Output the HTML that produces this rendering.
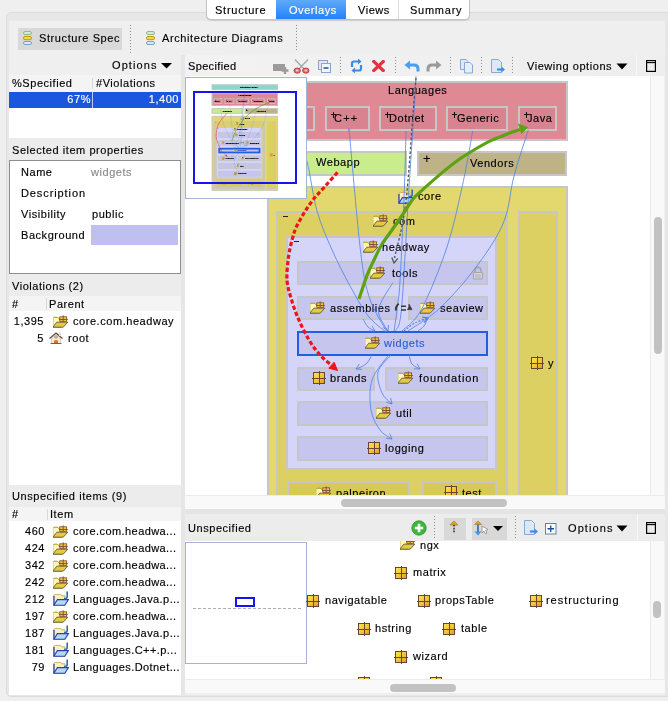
<!DOCTYPE html>
<html><head><meta charset="utf-8">
<style>
*{margin:0;padding:0;box-sizing:border-box}
html,body{width:668px;height:701px;overflow:hidden;background:#efefef;font-family:"Liberation Sans",sans-serif;font-size:12px;color:#000;position:relative}
.a{position:absolute}
.t{position:absolute;white-space:nowrap;line-height:14px;will-change:transform;font-size:11px;letter-spacing:0.55px;-webkit-text-stroke:0.15px currentColor}
.sep{position:absolute;width:1px;background:repeating-linear-gradient(#8e8e8e 0 1px,transparent 1px 3px)}
</style></head><body>
<svg width="0" height="0" style="position:absolute">
<defs>
<linearGradient id="pg" x1="0" y1="0" x2="1" y2="1"><stop offset="0" stop-color="#ffe650"/><stop offset="0.6" stop-color="#f0c030"/><stop offset="1" stop-color="#d89828"/></linearGradient>
<symbol id="fy" viewBox="0.8 -0.2 16 13">
 <path d="M0.6 12 V3.2 L1.8 2 H5 L6 3 H9 V12 Z" fill="#fff6bc" stroke="#a89c12" stroke-width="1"/>
 <path d="M0.6 12 L4.6 7 H15.6 L11 12 Z" fill="#e4ca3c" stroke="#5c5a48" stroke-width="0.9"/>
 <rect x="7.6" y="1.6" width="6.8" height="4.6" fill="#f5c832" stroke="#8a5a3a" stroke-width="0.9"/>
 <path d="M11 0.2 V6.4 M6.8 4.3 H15.6" stroke="#7a4a3a" stroke-width="0.9"/>
</symbol>
<symbol id="fb" viewBox="0 0 16 15">
 <path d="M0.8 4.2 L0.8 14.2 L12 14.2 L12 4.8 L8.6 4.8 L7.6 3.4 L2.6 3.4 Z" fill="#fdf0bc" stroke="#c9b060" stroke-width="1"/>
 <path d="M0.8 14.2 L4.4 8.6 L15.4 8.6 L11.8 14.2 Z" fill="#b6d8f6" stroke="#2442b4" stroke-width="1.1"/>
 <path d="M1 5 V14" stroke="#2442b4" stroke-width="1.2"/>
 <path d="M14.2 0.5 V5.5 Q14.2 7.5 12.2 7.5 H11" stroke="#2c6cb8" stroke-width="1.6" fill="none"/>
</symbol>
<symbol id="pk" viewBox="0 0 14 14">
 <rect x="1.5" y="1.5" width="11" height="11" fill="url(#pg)" stroke="#6a4434" stroke-width="1"/>
 <path d="M7.5 0 V14 M0 7.5 H14" stroke="#6a4434" stroke-width="1"/>
</symbol>
<symbol id="hs" viewBox="0 0 14 12">
 <path d="M2.5 6 V11.5 H11.5 V6 L7 2 Z" fill="#f4e8d8" stroke="#c8b8a0" stroke-width="0.6"/>
 <path d="M0.5 6.5 L7 1 L13.5 6.5" fill="none" stroke="#5a4a48" stroke-width="1.1"/>
 <rect x="10" y="0.5" width="2" height="3.5" fill="#e8dccc"/>
 <rect x="5.8" y="4" width="2.4" height="2" fill="#b8d8f0" stroke="#c07030" stroke-width="0.6"/>
 <path d="M5 11.5 V9 Q7 7 9 9 V11.5 Z" fill="#d07828"/>
 <path d="M1.5 11.5 H12.5" stroke="#903020" stroke-width="0.8"/>
</symbol>
<symbol id="lk" viewBox="0 0 12 14">
 <path d="M3 6.5 V4.5 Q3 1.2 6 1.2 Q9 1.2 9 4.5 V6.5" fill="none" stroke="#a4a4a4" stroke-width="1.5"/>
 <rect x="1.5" y="6.5" width="9" height="6.5" rx="1" fill="#d8d8e4" stroke="#a4a4a4" stroke-width="1.1"/>
 <path d="M3 9 H9 M3 11 H9" stroke="#a4a4a4" stroke-width="0.9"/>
</symbol>
</defs></svg>

<!-- outer panel -->
<div class="a" style="left:6px;top:12px;width:670px;height:685px;border:1px solid #dcdcdc;border-radius:5px;background:#e7e7e7"></div>
<div class="a" style="left:9px;top:21px;width:656px;height:674px;background:#efefef"></div>

<!-- top tabs -->
<div class="a" style="left:206px;top:-4px;width:264px;height:24px;background:#fff;border:1px solid #c4c4c4;border-radius:5px;overflow:hidden;box-shadow:0 0.5px 1px rgba(0,0,0,0.12)">
  <div class="a" style="left:69px;top:0;width:70px;height:23px;background:linear-gradient(#6ab0fb,#1f80fa)"></div>
  <div class="a" style="left:191px;top:0;width:1px;height:23px;background:#dcdcdc"></div>
  <div class="t" style="left:8px;top:6px;letter-spacing:0.75px">Structure</div>
  <div class="t" style="left:82px;top:6px;color:#fff">Overlays</div>
  <div class="t" style="left:151px;top:6px">Views</div>
  <div class="t" style="left:203px;top:6px;letter-spacing:0.75px">Summary</div>
</div>


<!-- LEFT PANEL -->
<!-- toolbar -->
<div class="a" style="left:18px;top:28px;width:104px;height:22px;background:#d9d9d9"></div>
<div class="sep" style="left:130px;top:25px;height:28px"></div>
<div class="sep" style="left:296px;top:25px;height:26px"></div>
<svg class="a" style="left:22px;top:30px" width="12" height="16" viewBox="0 0 12 16">
 <rect x="1.5" y="1.5" width="8" height="3" rx="1.5" fill="#d5ead0" stroke="#8dbb8a"/>
 <rect x="1.5" y="6.5" width="8" height="3.2" rx="1.5" fill="#f5d850" stroke="#c29a10"/>
 <rect x="1.5" y="11.5" width="8" height="3" rx="1.5" fill="#dde8f8" stroke="#7a9ed0"/>
</svg>
<div class="t" style="left:39px;top:31px;letter-spacing:0.6px">Structure Spec</div>
<svg class="a" style="left:145px;top:30px" width="12" height="16" viewBox="0 0 12 16">
 <rect x="1.5" y="1.5" width="8" height="3" rx="1.5" fill="#d5ead0" stroke="#8dbb8a"/>
 <rect x="1.5" y="6.5" width="8" height="3.2" rx="1.5" fill="#f5d850" stroke="#c29a10"/>
 <rect x="1.5" y="11.5" width="8" height="3" rx="1.5" fill="#dde8f8" stroke="#7a9ed0"/>
</svg>
<div class="t" style="left:162px;top:31px;letter-spacing:0.6px">Architecture Diagrams</div>

<!-- options row -->
<div class="a" style="left:9px;top:55px;width:172px;height:20px;background:#efefef"></div>
<div class="t" style="left:112px;top:58px;letter-spacing:1.1px">Options</div>
<svg class="a" style="left:160.5px;top:63px" width="11" height="6"><path d="M0 0 L11 0 L5.5 5.5 Z" fill="#000"/></svg>
<!-- table -->
<div class="a" style="left:9px;top:75px;width:172px;height:65px;background:#fff"></div>
<div class="a" style="left:9px;top:75px;width:172px;height:17px;background:#f4f4f4"></div>
<div class="a" style="left:92px;top:78px;width:1px;height:11px;background:#d8d8d8"></div>
<div class="t" style="left:12px;top:76px">%Specified</div>
<div class="t" style="left:96px;top:76px">#Violations</div>
<div class="a" style="left:9px;top:92px;width:172px;height:16px;background:#1a57de"></div>
<div class="a" style="left:92px;top:92px;width:1px;height:16px;background:#fff;opacity:.7"></div>
<div class="t" style="left:9px;top:92px;width:82px;text-align:right;color:#fff">67%</div>
<div class="t" style="left:93px;top:92px;width:86px;text-align:right;color:#fff">1,400</div>

<!-- selected item properties -->
<div class="a" style="left:9px;top:138px;width:172px;height:22px;background:#ececec"></div>
<div class="t" style="left:12px;top:143px">Selected item properties</div>
<div class="a" style="left:9px;top:160px;width:172px;height:114px;background:#fff;border:1px solid #8e8e8e"></div>
<div class="t" style="left:21px;top:165px">Name</div>
<div class="t" style="left:91px;top:165px;color:#8a8a8a">widgets</div>
<div class="t" style="left:21px;top:186px;letter-spacing:0.9px">Description</div>
<div class="t" style="left:21px;top:207px">Visibility</div>
<div class="t" style="left:92px;top:207px">public</div>
<div class="t" style="left:21px;top:228px">Background</div>
<div class="a" style="left:91px;top:225px;width:87px;height:20px;background:#bfbff0"></div>

<!-- violations -->
<div class="a" style="left:9px;top:274px;width:172px;height:22px;background:#ececec"></div>
<div class="t" style="left:12px;top:279px">Violations (2)</div>
<div class="a" style="left:9px;top:296px;width:172px;height:189px;background:#fff"></div>
<div class="a" style="left:9px;top:296px;width:172px;height:15px;background:#f4f4f4"></div>
<div class="a" style="left:46px;top:298px;width:1px;height:12px;background:#d8d8d8"></div>
<div class="t" style="left:12px;top:297px">#</div>
<div class="t" style="left:49px;top:297px">Parent</div>
<div class="t" style="left:9px;top:314px;width:35px;text-align:right">1,395</div>
<div class="t" style="left:73px;top:314px">core.com.headway</div>
<div class="a" style="left:53px;top:315px"><svg width="16" height="13"><use href="#fy"/></svg></div>
<div class="t" style="left:9px;top:331px;width:35px;text-align:right">5</div>
<div class="t" style="left:68px;top:331px">root</div>
<div class="a" style="left:49px;top:332px"><svg width="14" height="12"><use href="#hs"/></svg></div>

<!-- unspecified items -->
<div class="a" style="left:9px;top:485px;width:172px;height:22px;background:#ececec"></div>
<div class="t" style="left:12px;top:489px">Unspecified items (9)</div>
<div class="a" style="left:9px;top:507px;width:172px;height:188px;background:#fff"></div>
<div class="a" style="left:9px;top:507px;width:172px;height:14px;background:#f4f4f4"></div>
<div class="a" style="left:47px;top:509px;width:1px;height:11px;background:#d8d8d8"></div>
<div class="t" style="left:12px;top:507px">#</div>
<div class="t" style="left:50px;top:507px">Item</div>
<div class="t" style="left:10px;top:524.0px;width:35px;text-align:right">460</div>
<div class="t" style="left:73px;top:524.0px;letter-spacing:0.42px">core.com.headwa...</div>
<div class="a" style="left:53px;top:525.0px"><svg width="16" height="13"><use href="#fy"/></svg></div>
<div class="t" style="left:10px;top:541.0px;width:35px;text-align:right">424</div>
<div class="t" style="left:73px;top:541.0px;letter-spacing:0.42px">core.com.headwa...</div>
<div class="a" style="left:53px;top:542.0px"><svg width="16" height="13"><use href="#fy"/></svg></div>
<div class="t" style="left:10px;top:558.1px;width:35px;text-align:right">342</div>
<div class="t" style="left:73px;top:558.1px;letter-spacing:0.42px">core.com.headwa...</div>
<div class="a" style="left:53px;top:559.1px"><svg width="16" height="13"><use href="#fy"/></svg></div>
<div class="t" style="left:10px;top:575.1px;width:35px;text-align:right">242</div>
<div class="t" style="left:73px;top:575.1px;letter-spacing:0.42px">core.com.headwa...</div>
<div class="a" style="left:53px;top:576.1px"><svg width="16" height="13"><use href="#fy"/></svg></div>
<div class="t" style="left:10px;top:592.2px;width:35px;text-align:right">212</div>
<div class="t" style="left:73px;top:592.2px;letter-spacing:0.42px">Languages.Java.p...</div>
<div class="a" style="left:53px;top:591.2px"><svg width="16" height="15"><use href="#fb"/></svg></div>
<div class="t" style="left:10px;top:609.2px;width:35px;text-align:right">197</div>
<div class="t" style="left:73px;top:609.2px;letter-spacing:0.42px">core.com.headwa...</div>
<div class="a" style="left:53px;top:610.2px"><svg width="16" height="13"><use href="#fy"/></svg></div>
<div class="t" style="left:10px;top:626.3px;width:35px;text-align:right">187</div>
<div class="t" style="left:73px;top:626.3px;letter-spacing:0.42px">Languages.Java.p...</div>
<div class="a" style="left:53px;top:625.3px"><svg width="16" height="15"><use href="#fb"/></svg></div>
<div class="t" style="left:10px;top:643.4px;width:35px;text-align:right">181</div>
<div class="t" style="left:73px;top:643.4px;letter-spacing:0.42px">Languages.C++.p...</div>
<div class="a" style="left:53px;top:642.4px"><svg width="16" height="15"><use href="#fb"/></svg></div>
<div class="t" style="left:10px;top:660.4px;width:35px;text-align:right">79</div>
<div class="t" style="left:73px;top:660.4px;letter-spacing:0.42px">Languages.Dotnet...</div>
<div class="a" style="left:53px;top:659.4px"><svg width="16" height="15"><use href="#fb"/></svg></div>

<!-- RIGHT PANEL -->
<div class="a" style="left:181px;top:55px;width:4px;height:640px;background:#e6e6e6"></div>
<!-- specified toolbar -->
<div class="a" style="left:185px;top:55px;width:480px;height:21px;background:linear-gradient(90deg,#f2f2f2,#eeeeee)"></div>
<div class="t" style="left:188px;top:59px;letter-spacing:0.35px">Specified</div>
<!-- diagram viewport -->
<div class="a" style="left:185px;top:76px;width:465px;height:419px;background:#fff;overflow:hidden" id="dv">
<div class="a" style="left:-185px;top:-76px;width:668px;height:701px"><div class="a" style="left:267px;top:43px;width:301px;height:24px;background:#88d8d0;border:2px solid #c6c6c6"></div>
<div class="t" style="left:395px;top:48px;">Structure Spec</div>
<div class="a" style="left:267px;top:81px;width:301px;height:60px;background:#df8995;border:2px solid #c6c6c6"></div>
<div class="t" style="left:388px;top:83px;">Languages</div>
<div class="a" style="left:276px;top:106px;width:39px;height:25px;background:#d98390;border:2px solid #c6c6c6"></div>
<div class="a" style="left:282px;top:114px;width:5px;height:1px;background:#111"></div><div class="a" style="left:284px;top:111.5px;width:1px;height:6px;background:#111"></div>
<div class="t" style="left:279px;top:111px;">Relo</div>
<div class="a" style="left:325px;top:106px;width:45px;height:25px;background:#d98390;border:2px solid #c6c6c6"></div>
<div class="a" style="left:331px;top:114px;width:5px;height:1px;background:#111"></div><div class="a" style="left:333px;top:111.5px;width:1px;height:6px;background:#111"></div>
<div class="t" style="left:334px;top:111px;letter-spacing:1.2px">C++</div>
<div class="a" style="left:379px;top:106px;width:58px;height:25px;background:#d98390;border:2px solid #c6c6c6"></div>
<div class="a" style="left:385px;top:114px;width:5px;height:1px;background:#111"></div><div class="a" style="left:387px;top:111.5px;width:1px;height:6px;background:#111"></div>
<div class="t" style="left:389px;top:111px;">Dotnet</div>
<div class="a" style="left:446px;top:106px;width:62px;height:25px;background:#d98390;border:2px solid #c6c6c6"></div>
<div class="a" style="left:452px;top:114px;width:5px;height:1px;background:#111"></div><div class="a" style="left:454px;top:111.5px;width:1px;height:6px;background:#111"></div>
<div class="t" style="left:457px;top:111px;">Generic</div>
<div class="a" style="left:518px;top:106px;width:39px;height:25px;background:#d98390;border:2px solid #c6c6c6"></div>
<div class="a" style="left:524px;top:114px;width:5px;height:1px;background:#111"></div><div class="a" style="left:526px;top:111.5px;width:1px;height:6px;background:#111"></div>
<div class="t" style="left:526.5px;top:111px;">Java</div>
<div class="a" style="left:267px;top:151px;width:140px;height:25px;background:#c9ec8d;border:2px solid #c6c6c6"></div>
<div class="t" style="left:316px;top:155px;">Webapp</div>
<div class="a" style="left:417px;top:151px;width:150px;height:25px;background:#beb386;border:2px solid #c6c6c6"></div>
<div class="t" style="left:423px;top:152px;font-size:13px">+</div>
<div class="t" style="left:470px;top:156px;">Vendors</div>
<div class="a" style="left:267px;top:186px;width:301px;height:340px;background:#e3d86d;border:2px solid #c6c6c6"></div>
<div class="a" style="left:398px;top:189px"><svg width="16" height="15"><use href="#fb"/></svg></div>
<div class="t" style="left:418px;top:189px;">core</div>
<div class="a" style="left:276px;top:211px;width:232px;height:307px;background:#dcd062;border:2px solid #c6c6c6"></div>
<div class="a" style="left:283px;top:215.5px;width:5px;height:1.2px;background:#222"></div>
<div class="a" style="left:373px;top:214px"><svg width="16" height="13"><use href="#fy"/></svg></div>
<div class="t" style="left:393px;top:214px;">com</div>
<div class="a" style="left:518px;top:211px;width:40px;height:307px;background:#dcd062;border:2px solid #c6c6c6"></div>
<div class="a" style="left:530px;top:356px"><svg width="14" height="14"><use href="#pk"/></svg></div>
<div class="t" style="left:548px;top:356px;">y</div>
<div class="a" style="left:286px;top:236px;width:211px;height:234px;background:#d5d5fa;border:2px solid #c6c6c6"></div>
<div class="a" style="left:293.5px;top:240.5px;width:5px;height:1.2px;background:#222"></div>
<div class="a" style="left:363px;top:240px"><svg width="16" height="13"><use href="#fy"/></svg></div>
<div class="t" style="left:382px;top:240px;">headway</div>
<div class="a" style="left:297px;top:261px;width:191px;height:24px;background:#c5c5ee;border:2px solid #c6c6c6"></div>
<div class="a" style="left:370px;top:266px"><svg width="16" height="13"><use href="#fy"/></svg></div>
<div class="t" style="left:392px;top:266px;">tools</div>
<div class="a" style="left:472px;top:266px"><svg width="12" height="14"><use href="#lk"/></svg></div>
<div class="a" style="left:297px;top:296px;width:101px;height:24px;background:#c5c5ee;border:2px solid #c6c6c6"></div>
<div class="a" style="left:310px;top:301px"><svg width="16" height="13"><use href="#fy"/></svg></div>
<div class="t" style="left:330px;top:301px;">assemblies</div>
<div class="a" style="left:408px;top:296px;width:80px;height:24px;background:#c5c5ee;border:2px solid #c6c6c6"></div>
<div class="a" style="left:420px;top:301px"><svg width="16" height="13"><use href="#fy"/></svg></div>
<div class="t" style="left:440px;top:301px;">seaview</div>
<div class="a" style="left:297px;top:331px;width:191px;height:25px;background:#c5c5ee;border:2px solid #1f5fe0"></div>
<div class="a" style="left:365px;top:336px"><svg width="16" height="13"><use href="#fy"/></svg></div>
<div class="t" style="left:384px;top:336px;color:#2a5fd8">widgets</div>
<div class="a" style="left:297px;top:367px;width:78px;height:24px;background:#c5c5ee;border:2px solid #c6c6c6"></div>
<div class="a" style="left:312px;top:371px"><svg width="14" height="14"><use href="#pk"/></svg></div>
<div class="t" style="left:330px;top:371px;">brands</div>
<div class="a" style="left:385px;top:367px;width:103px;height:24px;background:#c5c5ee;border:2px solid #c6c6c6"></div>
<div class="a" style="left:398px;top:371px"><svg width="16" height="13"><use href="#fy"/></svg></div>
<div class="t" style="left:419px;top:371px;letter-spacing:0.9px">foundation</div>
<div class="a" style="left:297px;top:401px;width:191px;height:25px;background:#c5c5ee;border:2px solid #c6c6c6"></div>
<div class="a" style="left:376px;top:406px"><svg width="16" height="13"><use href="#fy"/></svg></div>
<div class="t" style="left:396px;top:406px;">util</div>
<div class="a" style="left:297px;top:436px;width:191px;height:25px;background:#c5c5ee;border:2px solid #c6c6c6"></div>
<div class="a" style="left:367px;top:441px"><svg width="14" height="14"><use href="#pk"/></svg></div>
<div class="t" style="left:385px;top:441px;">logging</div>
<div class="a" style="left:287px;top:481px;width:123px;height:29px;background:#d6ca55;border:2px solid #c6c6c6"></div>
<div class="a" style="left:316px;top:486px"><svg width="16" height="13"><use href="#fy"/></svg></div>
<div class="t" style="left:336px;top:486px;">palpeiron</div>
<div class="a" style="left:422px;top:481px;width:75px;height:29px;background:#d6ca55;border:2px solid #c6c6c6"></div>
<div class="a" style="left:444px;top:485px"><svg width="14" height="14"><use href="#pk"/></svg></div>
<div class="t" style="left:462px;top:486px;">test</div>
<svg class="a" style="left:0;top:0" width="668" height="701"><path d="M300.0,148.0 C301.2,150.5 304.6,152.5 307.4,163.0 C310.2,173.5 312.9,196.3 317.0,210.8 C321.1,225.3 326.5,237.3 332.0,249.8 C337.5,262.3 343.9,274.7 349.9,285.7 C355.9,296.7 361.9,307.9 367.9,315.6 C373.9,323.3 382.8,329.3 385.8,332.0" stroke="#4f80e6" stroke-width="0.8" fill="none"/>
<path d="M349.0,131.0 C349.2,132.5 348.1,120.2 350.0,140.0 C351.9,159.8 357.2,223.5 360.4,249.8 C363.6,276.1 365.0,284.0 369.4,297.7 C373.8,311.4 384.1,326.3 387.0,332.0" stroke="#4f80e6" stroke-width="0.8" fill="none"/>
<path d="M406.0,131.0 C405.7,141.3 405.2,167.7 404.2,192.7 C403.2,217.7 401.2,261.6 400.0,281.2 C398.8,300.8 398.0,301.7 397.0,310.0 C396.0,318.3 394.5,327.5 394.0,331.0" stroke="#4f80e6" stroke-width="0.8" fill="none"/>
<path d="M416.0,76.0 C415.7,81.7 415.4,90.1 414.2,110.0 C412.9,129.9 410.6,162.3 408.5,195.6 C406.4,228.9 403.6,287.4 401.4,310.0 C399.1,332.6 396.1,327.5 395.0,331.0" stroke="#4f80e6" stroke-width="0.8" fill="none"/>
<path d="M472.7,131.0 C471.0,139.9 467.0,164.9 462.7,184.2 C458.4,203.5 453.9,226.1 447.0,247.0 C440.1,267.9 428.8,295.7 421.3,309.7 C413.8,323.7 405.2,327.4 402.0,331.0" stroke="#4f80e6" stroke-width="0.8" fill="none"/>
<path d="M528.3,130.0 C525.9,137.7 518.0,160.8 514.0,176.0 C509.9,191.2 509.9,206.6 504.0,221.3 C498.1,236.0 488.8,249.7 478.4,264.0 C467.9,278.3 453.0,295.7 441.3,306.9 C429.6,318.1 413.6,327.0 408.0,331.0" stroke="#4f80e6" stroke-width="0.8" fill="none"/>
<path d="M392.8,282.6 C390.4,287.2 379.3,301.9 378.5,310.0 C377.7,318.1 386.4,327.5 388.0,331.0" stroke="#4f80e6" stroke-width="0.8" fill="none"/>
<path d="M388.6,325.0 L388.0,331.0 L383.1,327.5" stroke="#4f80e6" stroke-width="0.8" fill="none"/>
<path d="M363.0,319.0 C363.8,320.3 366.0,325.0 368.0,327.0 C370.0,329.0 373.8,330.3 375.0,331.0" stroke="#4f80e6" stroke-width="0.8" fill="none"/>
<path d="M372.0,325.8 L375.0,331.0 L369.0,331.0" stroke="#4f80e6" stroke-width="0.8" fill="none"/>
<path d="M372.0,355.0 C371.0,356.5 368.7,361.7 366.0,364.0 C363.3,366.3 357.7,368.2 356.0,369.0" stroke="#4f80e6" stroke-width="0.8" fill="none"/>
<path d="M362.0,369.4 L356.0,369.0 L359.3,364.0" stroke="#4f80e6" stroke-width="0.8" fill="none"/>
<path d="M409.0,355.0 C409.5,356.5 410.2,361.7 412.0,364.0 C413.8,366.3 418.7,368.2 420.0,369.0" stroke="#4f80e6" stroke-width="0.8" fill="none"/>
<path d="M417.2,363.7 L420.0,369.0 L414.0,368.8" stroke="#4f80e6" stroke-width="0.8" fill="none"/>
<path d="M391.0,355.0 C388.8,357.8 379.5,365.7 378.0,372.0 C376.5,378.3 379.7,387.7 382.0,393.0 C384.3,398.3 390.3,402.2 392.0,404.0" stroke="#4f80e6" stroke-width="0.8" fill="none"/>
<path d="M390.7,398.1 L392.0,404.0 L386.3,402.2" stroke="#4f80e6" stroke-width="0.8" fill="none"/>
<path d="M388.6,355.0 C385.8,359.2 374.9,370.8 372.0,380.0 C369.1,389.2 369.7,401.7 371.0,410.0 C372.3,418.3 376.5,425.2 380.0,430.0 C383.5,434.8 390.0,437.5 392.0,439.0" stroke="#4f80e6" stroke-width="0.8" fill="none"/>
<path d="M389.6,433.5 L392.0,439.0 L386.0,438.3" stroke="#4f80e6" stroke-width="0.8" fill="none"/>
<path d="M404.0,331.0 C405.8,329.7 411.0,325.2 415.0,323.0 C419.0,320.8 425.8,318.8 428.0,318.0" stroke="#4f80e6" stroke-width="1.2" fill="none" stroke-dasharray="2,1.5"/>
<path d="M422.1,317.1 L428.0,318.0 L424.2,322.7" stroke="#4f80e6" stroke-width="1.2" fill="none"/>
<path d="M418.0,331.0 C419.0,330.2 422.3,328.2 424.0,326.0 C425.7,323.8 427.3,319.3 428.0,318.0" stroke="#4f80e6" stroke-width="0.8" fill="none"/>
<path d="M416.0,78.0 C415.6,83.3 415.0,89.0 413.3,110.0 C411.6,131.0 408.7,179.5 405.6,204.2 C402.5,228.9 396.4,249.0 394.5,258.0" stroke="#4a5468" stroke-width="1.3" fill="none" stroke-dasharray="2.6,2"/>
<path d="M397.8,258.3 L394.0,263.0 L391.8,257.4" stroke="#505868" stroke-width="1.3" fill="none"/>
<path d="M401,306.3 H406 M401,310.1 H406" stroke="#3a3a3a" stroke-width="1.5" fill="none"/>
<path d="M398.8,303.8 Q395.6,306 395.8,310.5" stroke="#3a3a3a" stroke-width="2" fill="none"/><path d="M407.5,309.6 L412,309.6 L409,304.2 Q409.5,307.5 407.5,309.6 Z" fill="#3a3a3a" stroke="#3a3a3a" stroke-width="0.8"/>
<path d="M359.0,299.0 C360.4,295.0 364.7,281.4 367.2,274.9 C369.7,268.4 371.6,265.0 374.0,260.0 C376.4,255.0 378.5,250.0 381.5,245.0 C384.5,240.0 388.5,235.0 392.0,230.0 C395.5,225.0 399.0,220.0 402.4,215.0 C405.8,210.0 409.3,203.8 412.2,200.0 C415.1,196.2 415.7,196.2 420.0,192.2 C424.3,188.2 432.0,181.2 438.0,176.1 C444.0,171.0 449.9,166.0 455.9,161.7 C461.9,157.3 467.9,153.6 473.9,150.0 C479.9,146.4 485.9,142.9 491.9,140.1 C497.9,137.3 505.1,134.8 509.8,133.0 C514.5,131.2 518.3,130.2 520.0,129.6" stroke="#5ca214" stroke-width="3.2" fill="none" stroke-linecap="butt"/>
<path d="M527.5,127.5 L518.5,124 L521.5,133.5 Z" fill="#5ca214" stroke="#5ca214" stroke-width="0.8" stroke-linejoin="round"/>
<path d="M337.5,172.4 C335.4,174.8 328.6,182.3 324.7,186.7 C320.8,191.1 317.2,194.5 313.8,198.8 C310.4,203.1 307.3,207.7 304.4,212.4 C301.5,217.2 298.2,222.8 296.2,227.3 C294.2,231.8 293.5,234.6 292.2,239.5 C290.9,244.4 289.4,250.2 288.5,257.0 C287.6,263.8 286.6,273.2 287.0,280.0 C287.4,286.8 289.2,291.7 291.0,298.0 C292.8,304.3 295.0,311.0 298.0,318.0 C301.0,325.0 305.3,333.8 309.0,340.0 C312.7,346.2 316.5,351.0 320.0,355.0 C323.5,359.0 328.3,362.5 330.0,364.0" stroke="#f01515" stroke-width="3.2" fill="none" stroke-dasharray="4.2,2.3" stroke-linecap="butt"/>
<path d="M337.5,370.5 L328.8,368.2 L334.1,362.2 Z" fill="#f01515" stroke="#f01515" stroke-width="1" stroke-linejoin="round"/></svg>
</div>
<div class="a" style="left:0px;top:1px;width:122px;height:122px;background:#fff;border:1px solid #a3b6cf;overflow:hidden">
<div class="a" style="left:-32.74px;top:-2.62px;width:668px;height:701px;transform:scale(0.22);transform-origin:0 0">
<div class="a" style="left:267px;top:43px;width:301px;height:24px;background:#88d8d0;border:4.4px solid #c6c6c6"></div>
<div class="t" style="left:395px;top:48px;;-webkit-text-stroke:1px currentColor">Structure Spec</div>
<div class="a" style="left:267px;top:81px;width:301px;height:60px;background:#df8995;border:4.4px solid #c6c6c6"></div>
<div class="t" style="left:388px;top:83px;;-webkit-text-stroke:1px currentColor">Languages</div>
<div class="a" style="left:276px;top:106px;width:39px;height:25px;background:#d98390;border:4.4px solid #c6c6c6"></div>
<div class="a" style="left:282px;top:114px;width:5px;height:1px;background:#111"></div><div class="a" style="left:284px;top:111.5px;width:1px;height:6px;background:#111"></div>
<div class="t" style="left:279px;top:111px;;-webkit-text-stroke:1px currentColor">Relo</div>
<div class="a" style="left:325px;top:106px;width:45px;height:25px;background:#d98390;border:4.4px solid #c6c6c6"></div>
<div class="a" style="left:331px;top:114px;width:5px;height:1px;background:#111"></div><div class="a" style="left:333px;top:111.5px;width:1px;height:6px;background:#111"></div>
<div class="t" style="left:334px;top:111px;letter-spacing:1.2px;-webkit-text-stroke:1px currentColor">C++</div>
<div class="a" style="left:379px;top:106px;width:58px;height:25px;background:#d98390;border:4.4px solid #c6c6c6"></div>
<div class="a" style="left:385px;top:114px;width:5px;height:1px;background:#111"></div><div class="a" style="left:387px;top:111.5px;width:1px;height:6px;background:#111"></div>
<div class="t" style="left:389px;top:111px;;-webkit-text-stroke:1px currentColor">Dotnet</div>
<div class="a" style="left:446px;top:106px;width:62px;height:25px;background:#d98390;border:4.4px solid #c6c6c6"></div>
<div class="a" style="left:452px;top:114px;width:5px;height:1px;background:#111"></div><div class="a" style="left:454px;top:111.5px;width:1px;height:6px;background:#111"></div>
<div class="t" style="left:457px;top:111px;;-webkit-text-stroke:1px currentColor">Generic</div>
<div class="a" style="left:518px;top:106px;width:39px;height:25px;background:#d98390;border:4.4px solid #c6c6c6"></div>
<div class="a" style="left:524px;top:114px;width:5px;height:1px;background:#111"></div><div class="a" style="left:526px;top:111.5px;width:1px;height:6px;background:#111"></div>
<div class="t" style="left:526.5px;top:111px;;-webkit-text-stroke:1px currentColor">Java</div>
<div class="a" style="left:267px;top:151px;width:140px;height:25px;background:#c9ec8d;border:4.4px solid #c6c6c6"></div>
<div class="t" style="left:316px;top:155px;;-webkit-text-stroke:1px currentColor">Webapp</div>
<div class="a" style="left:417px;top:151px;width:150px;height:25px;background:#beb386;border:4.4px solid #c6c6c6"></div>
<div class="t" style="left:423px;top:152px;font-size:13px;-webkit-text-stroke:1px currentColor">+</div>
<div class="t" style="left:470px;top:156px;;-webkit-text-stroke:1px currentColor">Vendors</div>
<div class="a" style="left:267px;top:186px;width:301px;height:340px;background:#e3d86d;border:4.4px solid #c6c6c6"></div>
<div class="a" style="left:398px;top:189px"><svg width="16" height="15"><use href="#fb"/></svg></div>
<div class="t" style="left:418px;top:189px;;-webkit-text-stroke:1px currentColor">core</div>
<div class="a" style="left:276px;top:211px;width:232px;height:307px;background:#dcd062;border:4.4px solid #c6c6c6"></div>
<div class="a" style="left:283px;top:215.5px;width:5px;height:1.2px;background:#222"></div>
<div class="a" style="left:373px;top:214px"><svg width="16" height="13"><use href="#fy"/></svg></div>
<div class="t" style="left:393px;top:214px;;-webkit-text-stroke:1px currentColor">com</div>
<div class="a" style="left:518px;top:211px;width:40px;height:307px;background:#dcd062;border:4.4px solid #c6c6c6"></div>
<div class="a" style="left:530px;top:356px"><svg width="14" height="14"><use href="#pk"/></svg></div>
<div class="t" style="left:548px;top:356px;;-webkit-text-stroke:1px currentColor">y</div>
<div class="a" style="left:286px;top:236px;width:211px;height:234px;background:#d5d5fa;border:4.4px solid #c6c6c6"></div>
<div class="a" style="left:293.5px;top:240.5px;width:5px;height:1.2px;background:#222"></div>
<div class="a" style="left:363px;top:240px"><svg width="16" height="13"><use href="#fy"/></svg></div>
<div class="t" style="left:382px;top:240px;;-webkit-text-stroke:1px currentColor">headway</div>
<div class="a" style="left:297px;top:261px;width:191px;height:24px;background:#c5c5ee;border:4.4px solid #c6c6c6"></div>
<div class="a" style="left:370px;top:266px"><svg width="16" height="13"><use href="#fy"/></svg></div>
<div class="t" style="left:392px;top:266px;;-webkit-text-stroke:1px currentColor">tools</div>
<div class="a" style="left:472px;top:266px"><svg width="12" height="14"><use href="#lk"/></svg></div>
<div class="a" style="left:297px;top:296px;width:101px;height:24px;background:#c5c5ee;border:4.4px solid #c6c6c6"></div>
<div class="a" style="left:310px;top:301px"><svg width="16" height="13"><use href="#fy"/></svg></div>
<div class="t" style="left:330px;top:301px;;-webkit-text-stroke:1px currentColor">assemblies</div>
<div class="a" style="left:408px;top:296px;width:80px;height:24px;background:#c5c5ee;border:4.4px solid #c6c6c6"></div>
<div class="a" style="left:420px;top:301px"><svg width="16" height="13"><use href="#fy"/></svg></div>
<div class="t" style="left:440px;top:301px;;-webkit-text-stroke:1px currentColor">seaview</div>
<div class="a" style="left:297px;top:331px;width:191px;height:25px;background:#c5c5ee;border:8px solid #1f5fe0"></div>
<div class="a" style="left:365px;top:336px"><svg width="16" height="13"><use href="#fy"/></svg></div>
<div class="t" style="left:384px;top:336px;color:#2a5fd8;-webkit-text-stroke:1px currentColor">widgets</div>
<div class="a" style="left:297px;top:367px;width:78px;height:24px;background:#c5c5ee;border:4.4px solid #c6c6c6"></div>
<div class="a" style="left:312px;top:371px"><svg width="14" height="14"><use href="#pk"/></svg></div>
<div class="t" style="left:330px;top:371px;;-webkit-text-stroke:1px currentColor">brands</div>
<div class="a" style="left:385px;top:367px;width:103px;height:24px;background:#c5c5ee;border:4.4px solid #c6c6c6"></div>
<div class="a" style="left:398px;top:371px"><svg width="16" height="13"><use href="#fy"/></svg></div>
<div class="t" style="left:419px;top:371px;letter-spacing:0.9px;-webkit-text-stroke:1px currentColor">foundation</div>
<div class="a" style="left:297px;top:401px;width:191px;height:25px;background:#c5c5ee;border:4.4px solid #c6c6c6"></div>
<div class="a" style="left:376px;top:406px"><svg width="16" height="13"><use href="#fy"/></svg></div>
<div class="t" style="left:396px;top:406px;;-webkit-text-stroke:1px currentColor">util</div>
<div class="a" style="left:297px;top:436px;width:191px;height:25px;background:#c5c5ee;border:4.4px solid #c6c6c6"></div>
<div class="a" style="left:367px;top:441px"><svg width="14" height="14"><use href="#pk"/></svg></div>
<div class="t" style="left:385px;top:441px;;-webkit-text-stroke:1px currentColor">logging</div>
<div class="a" style="left:287px;top:481px;width:123px;height:29px;background:#d6ca55;border:4.4px solid #c6c6c6"></div>
<div class="a" style="left:316px;top:486px"><svg width="16" height="13"><use href="#fy"/></svg></div>
<div class="t" style="left:336px;top:486px;;-webkit-text-stroke:1px currentColor">palpeiron</div>
<div class="a" style="left:422px;top:481px;width:75px;height:29px;background:#d6ca55;border:4.4px solid #c6c6c6"></div>
<div class="a" style="left:444px;top:485px"><svg width="14" height="14"><use href="#pk"/></svg></div>
<div class="t" style="left:462px;top:486px;;-webkit-text-stroke:1px currentColor">test</div>
<svg class="a" style="left:0;top:0" width="668" height="701"><path d="M300.0,148.0 C301.2,150.5 304.6,152.5 307.4,163.0 C310.2,173.5 312.9,196.3 317.0,210.8 C321.1,225.3 326.5,237.3 332.0,249.8 C337.5,262.3 343.9,274.7 349.9,285.7 C355.9,296.7 361.9,307.9 367.9,315.6 C373.9,323.3 382.8,329.3 385.8,332.0" stroke="#4f80e6" stroke-width="0.8" fill="none"/>
<path d="M349.0,131.0 C349.2,132.5 348.1,120.2 350.0,140.0 C351.9,159.8 357.2,223.5 360.4,249.8 C363.6,276.1 365.0,284.0 369.4,297.7 C373.8,311.4 384.1,326.3 387.0,332.0" stroke="#4f80e6" stroke-width="0.8" fill="none"/>
<path d="M406.0,131.0 C405.7,141.3 405.2,167.7 404.2,192.7 C403.2,217.7 401.2,261.6 400.0,281.2 C398.8,300.8 398.0,301.7 397.0,310.0 C396.0,318.3 394.5,327.5 394.0,331.0" stroke="#4f80e6" stroke-width="0.8" fill="none"/>
<path d="M416.0,76.0 C415.7,81.7 415.4,90.1 414.2,110.0 C412.9,129.9 410.6,162.3 408.5,195.6 C406.4,228.9 403.6,287.4 401.4,310.0 C399.1,332.6 396.1,327.5 395.0,331.0" stroke="#4f80e6" stroke-width="0.8" fill="none"/>
<path d="M472.7,131.0 C471.0,139.9 467.0,164.9 462.7,184.2 C458.4,203.5 453.9,226.1 447.0,247.0 C440.1,267.9 428.8,295.7 421.3,309.7 C413.8,323.7 405.2,327.4 402.0,331.0" stroke="#4f80e6" stroke-width="0.8" fill="none"/>
<path d="M528.3,130.0 C525.9,137.7 518.0,160.8 514.0,176.0 C509.9,191.2 509.9,206.6 504.0,221.3 C498.1,236.0 488.8,249.7 478.4,264.0 C467.9,278.3 453.0,295.7 441.3,306.9 C429.6,318.1 413.6,327.0 408.0,331.0" stroke="#4f80e6" stroke-width="0.8" fill="none"/>
<path d="M392.8,282.6 C390.4,287.2 379.3,301.9 378.5,310.0 C377.7,318.1 386.4,327.5 388.0,331.0" stroke="#4f80e6" stroke-width="0.8" fill="none"/>
<path d="M388.6,325.0 L388.0,331.0 L383.1,327.5" stroke="#4f80e6" stroke-width="0.8" fill="none"/>
<path d="M363.0,319.0 C363.8,320.3 366.0,325.0 368.0,327.0 C370.0,329.0 373.8,330.3 375.0,331.0" stroke="#4f80e6" stroke-width="0.8" fill="none"/>
<path d="M372.0,325.8 L375.0,331.0 L369.0,331.0" stroke="#4f80e6" stroke-width="0.8" fill="none"/>
<path d="M372.0,355.0 C371.0,356.5 368.7,361.7 366.0,364.0 C363.3,366.3 357.7,368.2 356.0,369.0" stroke="#4f80e6" stroke-width="0.8" fill="none"/>
<path d="M362.0,369.4 L356.0,369.0 L359.3,364.0" stroke="#4f80e6" stroke-width="0.8" fill="none"/>
<path d="M409.0,355.0 C409.5,356.5 410.2,361.7 412.0,364.0 C413.8,366.3 418.7,368.2 420.0,369.0" stroke="#4f80e6" stroke-width="0.8" fill="none"/>
<path d="M417.2,363.7 L420.0,369.0 L414.0,368.8" stroke="#4f80e6" stroke-width="0.8" fill="none"/>
<path d="M391.0,355.0 C388.8,357.8 379.5,365.7 378.0,372.0 C376.5,378.3 379.7,387.7 382.0,393.0 C384.3,398.3 390.3,402.2 392.0,404.0" stroke="#4f80e6" stroke-width="0.8" fill="none"/>
<path d="M390.7,398.1 L392.0,404.0 L386.3,402.2" stroke="#4f80e6" stroke-width="0.8" fill="none"/>
<path d="M388.6,355.0 C385.8,359.2 374.9,370.8 372.0,380.0 C369.1,389.2 369.7,401.7 371.0,410.0 C372.3,418.3 376.5,425.2 380.0,430.0 C383.5,434.8 390.0,437.5 392.0,439.0" stroke="#4f80e6" stroke-width="0.8" fill="none"/>
<path d="M389.6,433.5 L392.0,439.0 L386.0,438.3" stroke="#4f80e6" stroke-width="0.8" fill="none"/>
<path d="M404.0,331.0 C405.8,329.7 411.0,325.2 415.0,323.0 C419.0,320.8 425.8,318.8 428.0,318.0" stroke="#4f80e6" stroke-width="1.2" fill="none" stroke-dasharray="2,1.5"/>
<path d="M422.1,317.1 L428.0,318.0 L424.2,322.7" stroke="#4f80e6" stroke-width="1.2" fill="none"/>
<path d="M418.0,331.0 C419.0,330.2 422.3,328.2 424.0,326.0 C425.7,323.8 427.3,319.3 428.0,318.0" stroke="#4f80e6" stroke-width="0.8" fill="none"/>
<path d="M416.0,78.0 C415.6,83.3 415.0,89.0 413.3,110.0 C411.6,131.0 408.7,179.5 405.6,204.2 C402.5,228.9 396.4,249.0 394.5,258.0" stroke="#4a5468" stroke-width="1.3" fill="none" stroke-dasharray="2.6,2"/>
<path d="M397.8,258.3 L394.0,263.0 L391.8,257.4" stroke="#505868" stroke-width="1.3" fill="none"/>
<path d="M401,306.3 H406 M401,310.1 H406" stroke="#3a3a3a" stroke-width="1.5" fill="none"/>
<path d="M398.8,303.8 Q395.6,306 395.8,310.5" stroke="#3a3a3a" stroke-width="2" fill="none"/><path d="M407.5,309.6 L412,309.6 L409,304.2 Q409.5,307.5 407.5,309.6 Z" fill="#3a3a3a" stroke="#3a3a3a" stroke-width="0.8"/>
<path d="M359.0,299.0 C360.4,295.0 364.7,281.4 367.2,274.9 C369.7,268.4 371.6,265.0 374.0,260.0 C376.4,255.0 378.5,250.0 381.5,245.0 C384.5,240.0 388.5,235.0 392.0,230.0 C395.5,225.0 399.0,220.0 402.4,215.0 C405.8,210.0 409.3,203.8 412.2,200.0 C415.1,196.2 415.7,196.2 420.0,192.2 C424.3,188.2 432.0,181.2 438.0,176.1 C444.0,171.0 449.9,166.0 455.9,161.7 C461.9,157.3 467.9,153.6 473.9,150.0 C479.9,146.4 485.9,142.9 491.9,140.1 C497.9,137.3 505.1,134.8 509.8,133.0 C514.5,131.2 518.3,130.2 520.0,129.6" stroke="#5ca214" stroke-width="3.2" fill="none" stroke-linecap="butt"/>
<path d="M527.5,127.5 L518.5,124 L521.5,133.5 Z" fill="#5ca214" stroke="#5ca214" stroke-width="0.8" stroke-linejoin="round"/>
<path d="M337.5,172.4 C335.4,174.8 328.6,182.3 324.7,186.7 C320.8,191.1 317.2,194.5 313.8,198.8 C310.4,203.1 307.3,207.7 304.4,212.4 C301.5,217.2 298.2,222.8 296.2,227.3 C294.2,231.8 293.5,234.6 292.2,239.5 C290.9,244.4 289.4,250.2 288.5,257.0 C287.6,263.8 286.6,273.2 287.0,280.0 C287.4,286.8 289.2,291.7 291.0,298.0 C292.8,304.3 295.0,311.0 298.0,318.0 C301.0,325.0 305.3,333.8 309.0,340.0 C312.7,346.2 316.5,351.0 320.0,355.0 C323.5,359.0 328.3,362.5 330.0,364.0" stroke="#f01515" stroke-width="3.2" fill="none" stroke-dasharray="4.2,2.3" stroke-linecap="butt"/>
<path d="M337.5,370.5 L328.8,368.2 L334.1,362.2 Z" fill="#f01515" stroke="#f01515" stroke-width="1" stroke-linejoin="round"/></svg>
</div>
<div class="a" style="left:7px;top:13px;width:104px;height:93px;border:2.2px solid #1515f0"></div>
</div>
</div>
<!-- vertical scrollbar -->
<div class="a" style="left:650px;top:76px;width:14px;height:419px;background:#f9f9f9;border-left:1px solid #ebebeb"></div>
<div class="a" style="left:654px;top:217px;width:8px;height:137px;background:#c2c2c2;border-radius:4px"></div>
<!-- horizontal scrollbar -->
<div class="a" style="left:185px;top:495px;width:480px;height:14px;background:#f9f9f9;border-top:1px solid #ebebeb"></div>
<div class="a" style="left:341px;top:499px;width:166px;height:8px;background:#c2c2c2;border-radius:4px"></div>
<div class="a" style="left:185px;top:509px;width:480px;height:5px;background:#e4e4e4"></div>

<!-- unspecified toolbar -->
<div class="a" style="left:185px;top:514px;width:480px;height:27px;background:#ececec"></div>
<div class="t" style="left:188px;top:521px">Unspecified</div>

<!-- specified toolbar icons -->
<svg class="a" style="left:272px;top:58px" width="18" height="17" viewBox="0 0 18 17">
 <rect x="1" y="6" width="12" height="7" fill="#9b9b9b"/>
 <path d="M13 9 V16 M9.5 12.5 H16.5" stroke="#9b9b9b" stroke-width="2.4"/>
</svg>
<svg class="a" style="left:293px;top:58px" width="17" height="17" viewBox="0 0 17 17">
 <path d="M2 1.5 L11 11 M15 1.5 L6 11" stroke="#a8a8a8" stroke-width="1.4"/>
 <ellipse cx="4.2" cy="12.6" rx="3.2" ry="2.6" fill="#e36a70" stroke="#c43c44" stroke-width="1"/>
 <ellipse cx="12.8" cy="12.6" rx="3.2" ry="2.6" fill="#e36a70" stroke="#c43c44" stroke-width="1"/>
 <ellipse cx="4.2" cy="12.6" rx="1.4" ry="1" fill="#f4d0d0"/>
 <ellipse cx="12.8" cy="12.6" rx="1.4" ry="1" fill="#f4d0d0"/>
</svg>
<svg class="a" style="left:317px;top:59px" width="15" height="15" viewBox="0 0 15 15">
 <rect x="1.5" y="1.5" width="9" height="9" fill="#dfe8f4" stroke="#8ca4c8"/>
 <rect x="4.5" y="4.5" width="9" height="9" fill="#f2f6fb" stroke="#8ca4c8"/>
 <path d="M6.5 9 H11.5" stroke="#24408a" stroke-width="1.4"/>
</svg>
<div class="sep" style="left:340px;top:57px;height:16px"></div>
<svg class="a" style="left:350px;top:58px" width="13" height="16" viewBox="0 0 13 16">
 <path d="M2 9 V5.5 Q2 3.5 4 3.5 H9" stroke="#3a8ae6" stroke-width="2.2" fill="none"/>
 <path d="M8 0.5 L11.5 3.5 L8 6.5 Z" fill="#3a8ae6"/>
 <path d="M11 7 V10.5 Q11 12.5 9 12.5 H4" stroke="#3a8ae6" stroke-width="2.2" fill="none"/>
 <path d="M5 9.5 L1.5 12.5 L5 15.5 Z" fill="#3a8ae6"/>
</svg>
<svg class="a" style="left:372px;top:60px" width="13" height="12" viewBox="0 0 13 12">
 <path d="M1.8 1.5 L11.2 10.5 M11.2 1.5 L1.8 10.5" stroke="#e2333f" stroke-width="3.2" stroke-linecap="square"/>
</svg>
<div class="sep" style="left:395px;top:57px;height:16px"></div>
<svg class="a" style="left:404px;top:60px" width="16" height="12" viewBox="0 0 16 12">
 <path d="M6 0.5 L0.5 5 L6 9.5 Z" fill="#4aa0f0"/>
 <path d="M5 5 H10 Q14 5 14 9 V11.5" stroke="#4aa0f0" stroke-width="3" fill="none"/>
</svg>
<svg class="a" style="left:426px;top:60px" width="16" height="12" viewBox="0 0 16 12">
 <path d="M10 0.5 L15.5 5 L10 9.5 Z" fill="#999"/>
 <path d="M11 5 H6 Q2 5 2 9 V11.5" stroke="#999" stroke-width="3" fill="none"/>
</svg>
<div class="sep" style="left:450px;top:57px;height:16px"></div>
<svg class="a" style="left:459px;top:58px" width="15" height="16" viewBox="0 0 15 16">
 <path d="M1.5 1.5 H7 L9 3.5 V11.5 H1.5 Z" fill="#dce8f6" stroke="#8aa8d0"/>
 <path d="M5.5 4.5 H11 L13.5 7 V15 H5.5 Z" fill="#e6eef8" stroke="#8aa8d0"/>
</svg>
<div class="sep" style="left:481px;top:57px;height:16px"></div>
<svg class="a" style="left:490px;top:58px" width="16" height="16" viewBox="0 0 16 16">
 <path d="M1.5 1.5 H8.5 L11.5 4.5 V14.5 H1.5 Z" fill="#dce8f6" stroke="#8aa8d0"/>
 <path d="M7 11.5 H12" stroke="#3a90e8" stroke-width="2.2"/>
 <path d="M11.5 8.5 L15 11.5 L11.5 14.5 Z" fill="#3a90e8"/>
</svg>
<div class="sep" style="left:512px;top:57px;height:16px"></div>
<div class="t" style="left:527px;top:59px">Viewing options</div>
<svg class="a" style="left:616px;top:63px" width="12" height="7"><path d="M0.5 0.5 L11.5 0.5 L6 6.5 Z" fill="#000"/></svg>
<div class="a" style="left:636px;top:55px;width:1px;height:21px;background:#f8f8f8"></div>
<svg class="a" style="left:646px;top:60px" width="10" height="12" viewBox="0 0 10 12">
 <rect x="0.6" y="0.6" width="8.8" height="10.8" fill="none" stroke="#000" stroke-width="1.2"/>
 <path d="M0.6 2.6 H9.4" stroke="#000" stroke-width="1.1"/>
</svg>

<!-- unspecified toolbar icons -->
<svg class="a" style="left:411px;top:520px" width="16" height="16" viewBox="0 0 16 16">
 <circle cx="8" cy="8" r="7.2" fill="#3bb83b" stroke="#2a962a" stroke-width="0.8"/>
 <path d="M8 3.8 V12.2 M3.8 8 H12.2" stroke="#fff" stroke-width="2.6"/>
</svg>
<div class="sep" style="left:434px;top:516px;height:22px"></div>
<div class="a" style="left:444px;top:518px;width:22px;height:22px;background:#d8d8d8"></div>
<svg class="a" style="left:448px;top:520px" width="12" height="14" viewBox="0 0 12 14">
 <path d="M6 1 L2 5 H10 Z" fill="#e0a030" stroke="#b07010" stroke-width="0.6"/>
 <path d="M6 5 V13" stroke="#222" stroke-width="1.4" stroke-dasharray="1.6,1.2"/>
</svg>
<div class="a" style="left:472px;top:518px;width:35px;height:22px;background:#d8d8d8"></div>
<svg class="a" style="left:473px;top:520px" width="18" height="16" viewBox="0 0 18 16">
 <path d="M5 1 L1.5 4.5 H8.5 Z" fill="#e0a030" stroke="#b07010" stroke-width="0.6"/>
 <path d="M5 4.5 V12" stroke="#2050a0" stroke-width="1.4"/>
 <path d="M5 15.5 L1.5 11.5 H8.5 Z" fill="#3a9ae8"/>
 <path d="M9 6 L15 9.5 L12.5 10.5 L14 13 L12.5 13.8 L11 11.2 L9 12.8 Z" fill="#fff" stroke="#888" stroke-width="0.8"/>
</svg>
<svg class="a" style="left:493px;top:526px" width="10" height="5"><path d="M0 0 L10 0 L5 5 Z" fill="#000"/></svg>
<div class="sep" style="left:515px;top:516px;height:22px"></div>
<svg class="a" style="left:523px;top:520px" width="16" height="16" viewBox="0 0 16 16">
 <path d="M1.5 0.5 H8.5 L11.5 3.5 V14.5 H1.5 Z" fill="#dce8f6" stroke="#8aa8d0"/>
 <path d="M7 11.5 H12" stroke="#3a90e8" stroke-width="2.2"/>
 <path d="M11.5 8.5 L15 11.5 L11.5 14.5 Z" fill="#3a90e8"/>
</svg>
<svg class="a" style="left:545px;top:523px" width="12" height="12" viewBox="0 0 12 12">
 <rect x="0.5" y="0.5" width="10.5" height="10.5" fill="#fff" stroke="#5a80b0"/>
 <path d="M5.75 2.5 V9 M2.5 5.75 H9" stroke="#1a4a9a" stroke-width="1.3"/>
</svg>
<div class="t" style="left:568px;top:521px;letter-spacing:1.1px">Options</div>
<svg class="a" style="left:616px;top:525px" width="12" height="7"><path d="M0.5 0.5 L11.5 0.5 L6 6.5 Z" fill="#000"/></svg>
<div class="a" style="left:637px;top:514px;width:1px;height:27px;background:#f8f8f8"></div>
<svg class="a" style="left:646px;top:522px" width="10" height="12" viewBox="0 0 10 12">
 <rect x="0.6" y="0.6" width="8.8" height="10.8" fill="none" stroke="#000" stroke-width="1.2"/>
 <path d="M0.6 2.6 H9.4" stroke="#000" stroke-width="1.1"/>
</svg>

<div class="a" style="left:185px;top:541px;width:465px;height:138px;background:#fff;overflow:hidden">
<div class="a" style="left:0;top:1px;width:122px;height:122px;background:#fff;border:1px solid #a3b6cf"><div class="a" style="left:7px;top:64.5px;width:108px;height:1px;border-top:1px dashed #b0b0b0"></div><div class="a" style="left:49px;top:54px;width:20px;height:10px;border:2.2px solid #1515f0"></div></div>
<div class="a" style="left:215px;top:-4px"><svg width="16" height="13"><use href="#fy"/></svg></div>
<div class="t" style="left:235px;top:-3px">ngx</div>
<div class="a" style="left:209px;top:25px"><svg width="14" height="14"><use href="#pk"/></svg></div>
<div class="t" style="left:228px;top:24px">matrix</div>
<div class="a" style="left:121px;top:53px"><svg width="14" height="14"><use href="#pk"/></svg></div>
<div class="t" style="left:140px;top:52px">navigatable</div>
<div class="a" style="left:232px;top:53px"><svg width="14" height="14"><use href="#pk"/></svg></div>
<div class="t" style="left:250px;top:52px">propsTable</div>
<div class="a" style="left:344px;top:53px"><svg width="14" height="14"><use href="#pk"/></svg></div>
<div class="t" style="left:361px;top:52px;letter-spacing:0.95px">restructuring</div>
<div class="a" style="left:172px;top:81px"><svg width="14" height="14"><use href="#pk"/></svg></div>
<div class="t" style="left:190px;top:80px">hstring</div>
<div class="a" style="left:257px;top:81px"><svg width="14" height="14"><use href="#pk"/></svg></div>
<div class="t" style="left:276px;top:80px">table</div>
<div class="a" style="left:209px;top:109px"><svg width="14" height="14"><use href="#pk"/></svg></div>
<div class="t" style="left:228px;top:108px">wizard</div>
<div class="a" style="left:172px;top:135px"><svg width="14" height="14"><use href="#pk"/></svg></div>
<div class="t" style="left:191px;top:135px">ioutils</div>
<div class="a" style="left:244px;top:135px"><svg width="14" height="14"><use href="#pk"/></svg></div>
<div class="t" style="left:264px;top:135px">model</div>
</div>
<div class="a" style="left:650px;top:541px;width:14px;height:138px;background:#f9f9f9;border-left:1px solid #ebebeb"></div>
<div class="a" style="left:653px;top:601px;width:8px;height:17px;background:#c2c2c2;border-radius:4px"></div>
<div class="a" style="left:185px;top:679px;width:480px;height:14px;background:#f9f9f9;border-top:1px solid #ebebeb"></div>
<div class="a" style="left:390px;top:684px;width:66px;height:8px;background:#c2c2c2;border-radius:4px"></div>
</body></html>
